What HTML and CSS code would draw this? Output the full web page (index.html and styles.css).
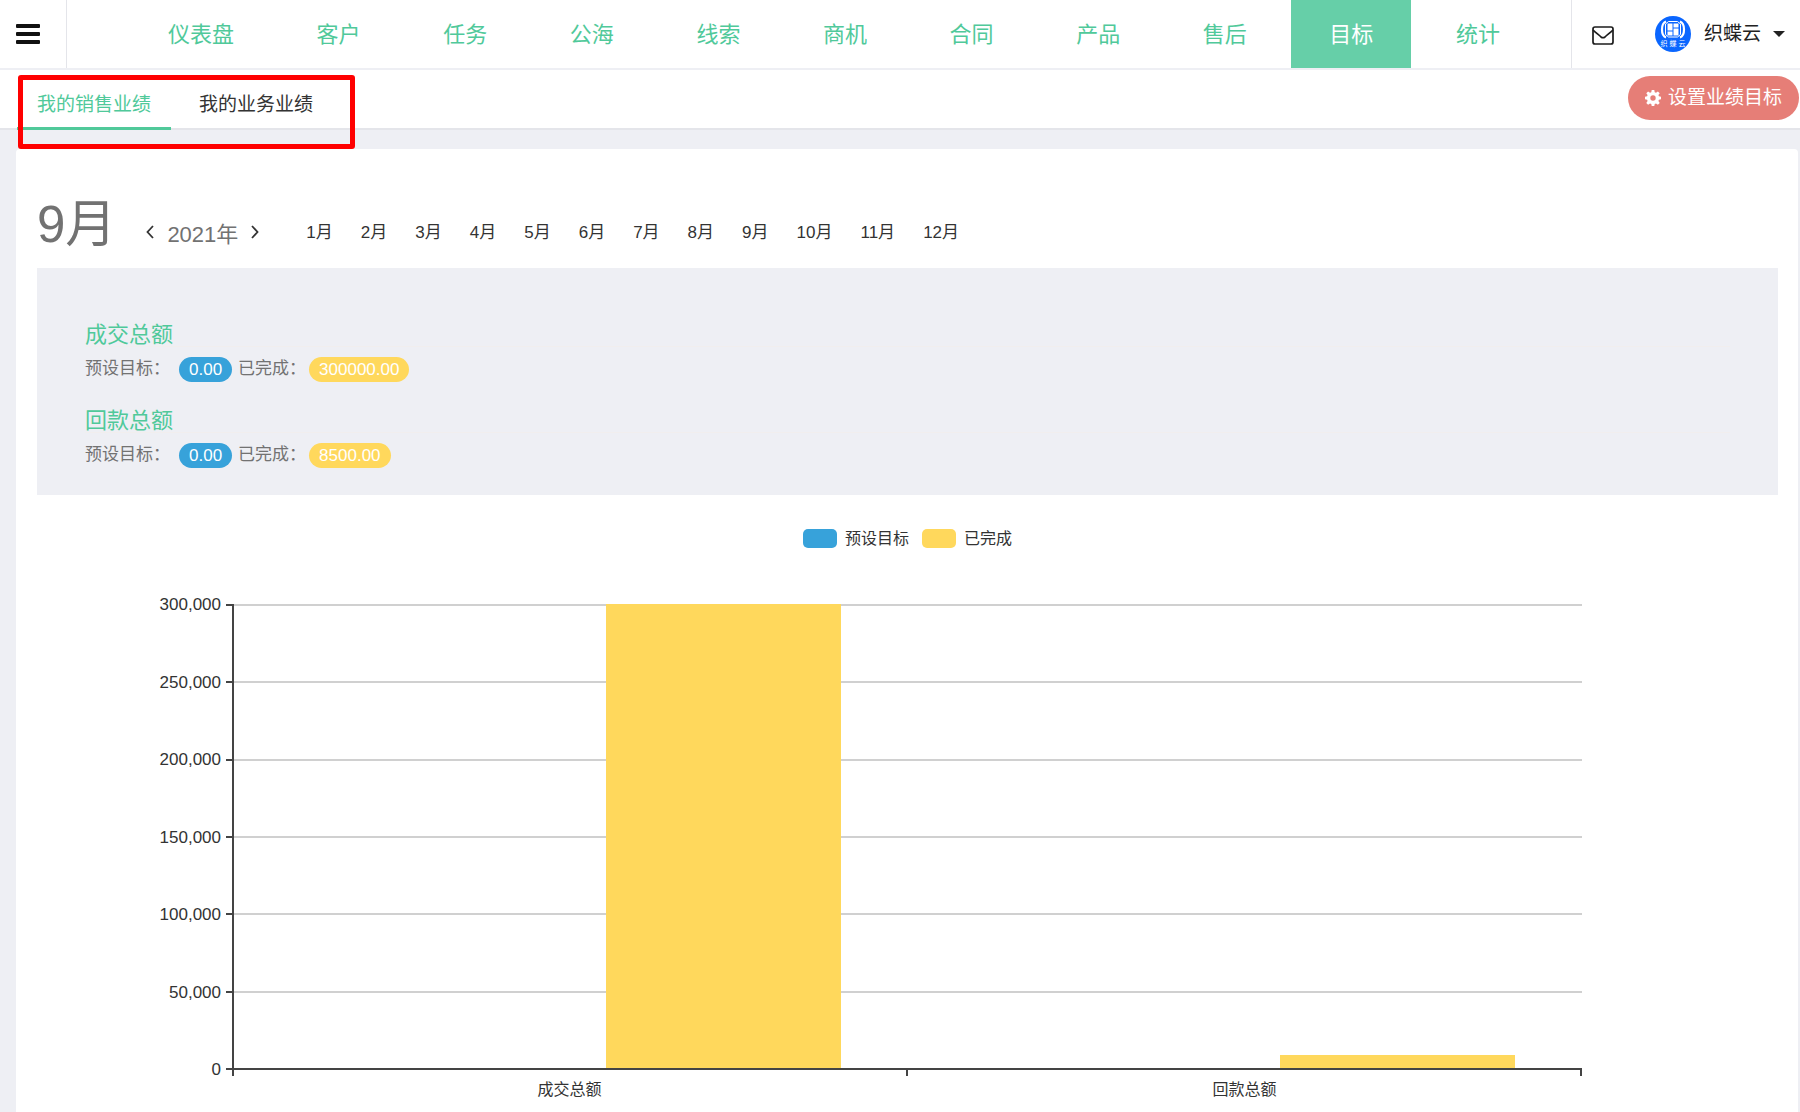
FILE: index.html
```html
<!DOCTYPE html>
<html lang="zh-CN">
<head>
<meta charset="utf-8">
<meta name="viewport" content="width=device-width, initial-scale=1">
<title>我的销售业绩</title>
<link rel="stylesheet" href="styles.css">
</head>
<body>
<header class="topbar">
  <div class="menu-cell">
    <button class="menu-button" type="button" aria-label="菜单"><span></span><span></span><span></span></button>
  </div>
  <nav class="main-nav">
    <a href="#">仪表盘</a>
    <a href="#">客户</a>
    <a href="#">任务</a>
    <a href="#">公海</a>
    <a href="#">线索</a>
    <a href="#">商机</a>
    <a href="#">合同</a>
    <a href="#">产品</a>
    <a href="#">售后</a>
    <a href="#" class="active" aria-current="page">目标</a>
    <a href="#">统计</a>
  </nav>
  <div class="user-area">
    <a class="mail" href="#" aria-label="消息">
      <svg width="24" height="20" viewBox="0 0 24 20" fill="none" stroke="#1c1c1c" stroke-width="1.700" stroke-linejoin="round"><rect x="2" y="2" width="20" height="17" rx="2"/><path d="M2 5c3 3 6 5 8 7q2 1.400 4 0c2-2 5-4 8-7"/></svg>
    </a>
    <button class="user-menu" type="button">
      <svg class="avatar" width="36" height="36" viewBox="0 0 36 36">
        <circle cx="18" cy="18" r="18" fill="#0a66ff"/>
        <g fill="none" stroke="#fff">
          <path d="M11 5.500Q7 7 7 13.500t4 8M25 5.500q4 1.500 4 8t-4 8" stroke-width="2.200"/>
          <path d="M13.500 5.500h9l3 2.500v10.500l-3 2.500h-9l-3-2.500V8z" stroke-width="1"/>
        </g>
        <path d="M12.500 7.500h5v7h-5zM12.500 15.500h5v4h-5zM18.500 7.500h5v4h-5zM18.500 12.500h5v7h-5z" fill="#fff"/>
        <text class="avatar-text" x="18" y="30" text-anchor="middle">织 蝶 云</text>
      </svg>
      <span>织蝶云</span>
      <i class="caret"></i>
    </button>
  </div>
</header>

<div class="subbar">
  <nav class="tabs">
    <a href="#" class="tab active">我的销售业绩</a>
    <a href="#" class="tab">我的业务业绩</a>
    <span class="highlight"></span>
  </nav>
  <button class="goal-button" type="button">
    <svg width="16" height="16" viewBox="0 0 16 16"><path fill="#fff" fill-rule="evenodd" d="M6.700 0h2.600l.4 2.200 1.300.5L12.900 1.400l1.800 1.800-1.300 1.900.5 1.200 2.100.4v2.600l-2.100.4-.5 1.300 1.300 1.900-1.800 1.800-1.900-1.300-1.300.5L9.300 16H6.700l-.4-2.100-1.300-.5-1.900 1.300-1.800-1.800L2.600 11l-.5-1.300L0 9.300V6.700l2.100-.4.5-1.200L1.300 3.200l1.800-1.800L5 2.700l1.300-.5zM8 5.300a2.700 2.700 0 1 0 0 5.400 2.700 2.700 0 0 0 0-5.400z"/></svg>
    <span>设置业绩目标</span>
  </button>
</div>

<main class="card">
  <div class="period">
    <h1>9月</h1>
    <div class="year">
      <button type="button" aria-label="上一年"><svg width="8" height="14" viewBox="0 0 8 14" fill="none" stroke="#333" stroke-width="1.800"><path d="M7 1 1.500 7 7 13"/></svg></button>
      <span>2021年</span>
      <button type="button" aria-label="下一年"><svg width="8" height="14" viewBox="0 0 8 14" fill="none" stroke="#333" stroke-width="1.800"><path d="M1 1l5.500 6L1 13"/></svg></button>
    </div>
    <nav class="months">
      <a href="#">1月</a><a href="#">2月</a><a href="#">3月</a><a href="#">4月</a><a href="#">5月</a><a href="#">6月</a><a href="#">7月</a><a href="#">8月</a><a href="#">9月</a><a href="#">10月</a><a href="#">11月</a><a href="#">12月</a>
    </nav>
  </div>

  <section class="summary">
    <div class="metric">
      <h2>成交总额</h2>
      <p>预设目标：<span class="badge blue">0.00</span>已完成：<span class="badge yellow">300000.00</span></p>
    </div>
    <div class="metric">
      <h2>回款总额</h2>
      <p>预设目标：<span class="badge blue">0.00</span>已完成：<span class="badge yellow">8500.00</span></p>
    </div>
  </section>

  <section class="chart">
    <div class="legend">
      <span class="key"><i class="swatch blue"></i>预设目标</span>
      <span class="key"><i class="swatch yellow"></i>已完成</span>
    </div>
    <div class="plot-row">
      <div class="y-labels">
        <span>300,000</span><span>250,000</span><span>200,000</span><span>150,000</span><span>100,000</span><span>50,000</span><span>0</span>
      </div>
      <div class="y-ticks"><i></i><i></i><i></i><i></i><i></i><i></i><i></i></div>
      <div class="plot">
        <div class="grid-lines"><i></i><i></i><i></i><i></i><i></i><i></i></div>
        <div class="bars">
          <div class="group"><i class="bar blue" style="height:0%"></i><i class="bar yellow" style="height:100%"></i></div>
          <div class="group"><i class="bar blue" style="height:0%"></i><i class="bar yellow" style="height:2.83%"></i></div>
        </div>
      </div>
    </div>
    <div class="x-axis">
      <div class="x-ticks"><i></i><i></i><i></i></div>
      <div class="x-labels"><span>成交总额</span><span>回款总额</span></div>
    </div>
  </section>
</main>
</body>
</html>
```
FILE: styles.css
```css
* { box-sizing: border-box; }

body {
  margin: 0;
  background: #eeeff4;
  color: #333;
  font-family: "Liberation Sans", "Noto Sans CJK SC", sans-serif;
  font-size: 17px;
}

a { color: inherit; text-decoration: none; }

button {
  padding: 0;
  border: 0;
  background: none;
  color: inherit;
  font: inherit;
  cursor: pointer;
}

h1, h2, p { margin: 0; font-weight: 400; }

svg { display: block; }

.blue { background: #37a2da; }
.yellow { background: #ffd85c; }

/* Top bar */
.topbar {
  display: flex;
  height: 70px;
  background: #fff;
  border-bottom: 2px solid #eeeff4;
}

.menu-cell {
  display: flex;
  align-items: center;
  width: 67px;
  padding-left: 16px;
  border-right: 1px solid #e4e5ea;
}

.menu-button { display: grid; gap: 4px; }

.menu-button span {
  width: 24px;
  height: 4px;
  border-radius: 1px;
  background: #111;
}

.main-nav {
  display: flex;
  flex: 1;
  justify-content: space-between;
  padding: 0 33px 0 63px;
  color: #50c99a;
  font-size: 22px;
  line-height: 70px;
}

.main-nav a { height: 68px; padding: 0 38px; white-space: nowrap; }
.main-nav .active { background: #66cfa8; color: #fff; }

.user-area {
  display: flex;
  align-items: center;
  gap: 40px;
  padding: 0 15px 0 19px;
  border-left: 1px solid #e4e5ea;
}

.mail { padding-top: 2px; }

.user-menu {
  display: flex;
  align-items: center;
  gap: 12px;
  color: #222;
  font-size: 19px;
  line-height: 24px;
}

.avatar { margin-right: 1px; }
.avatar-text { fill: #fff; font-size: 7px; }

.caret {
  border: 6px solid transparent;
  border-top-color: #222;
  border-bottom: 0;
}

/* Tabs */
.subbar {
  display: flex;
  justify-content: space-between;
  align-items: flex-start;
  height: 60px;
  padding: 0 1px 0 17px;
  background: #fff;
  border-bottom: 2px solid #e4e5ea;
}

.tabs { position: relative; display: flex; gap: 8px; }

.tab {
  height: 60px;
  padding: 0 20px;
  font-size: 19px;
  line-height: 69px;
}

.tab.active { border-bottom: 3px solid #50c99a; color: #50c99a; }

.highlight {
  position: absolute;
  top: 5px;
  left: 1px;
  width: 337px;
  height: 74px;
  border: 5px solid #f00;
  border-radius: 3px;
}

.goal-button {
  display: flex;
  align-items: center;
  gap: 7px;
  height: 44px;
  margin-top: 6px;
  padding: 0 17px;
  border-radius: 22px;
  background: #e67e77;
  color: #fff;
  font-size: 19px;
  line-height: 26px;
}

/* Card */
.card {
  margin: 19px 2px 0 16px;
  padding: 46px 20px 12px 21px;
  border-radius: 4px 4px 0 0;
  background: #fff;
}

.period {
  display: flex;
  align-items: baseline;
  height: 73px;
}

h1 { color: #727272; font-size: 51px; line-height: 60px; }

.year {
  display: flex;
  align-items: center;
  align-self: center;
  gap: 13px;
  margin-left: 30px;
  color: #727272;
  font-size: 22px;
}

.months { display: flex; gap: 28px; margin-left: 47px; padding-bottom: 2px; align-self: center; }

.summary {
  padding: 47px 48px 25px;
  background: #eeeff4;
}

.metric + .metric { margin-top: 17px; }

h2 {
  height: 32px;
  border-bottom: 1px solid #f1eeee;
  color: #50c99a;
  font-size: 22px;
  line-height: 39px;
}

.metric p {
  display: flex;
  align-items: center;
  height: 37px;
  padding-top: 7px;
  color: #727272;
  line-height: 22px;
}

.badge {
  height: 25px;
  margin: 0 6px 0 9px;
  padding: 0 10px;
  border-radius: 13px;
  color: #fff;
  line-height: 26px;
}

.badge.yellow { margin: 0 0 0 3px; }

/* Chart */
.chart { color: #333; line-height: 20px; }

.legend {
  display: flex;
  justify-content: center;
  gap: 13px;
  padding-top: 33px;
  font-size: 16px;
  line-height: 21px;
}

.key { display: flex; align-items: center; gap: 8px; }
.swatch { width: 34px; height: 19px; border-radius: 5px; }

.plot-row { display: flex; padding: 46px 196px 0 0; }

.y-labels, .y-ticks {
  display: flex;
  flex-direction: column;
  justify-content: space-between;
}

.y-labels { width: 184px; margin-bottom: -10px; text-align: right; }
.y-ticks { width: 6px; margin: 9px 0 0 5px; }
.y-ticks i { height: 2px; background: #444; }

.plot {
  display: grid;
  flex: 1;
  height: 466px;
  margin-top: 9px;
  border: solid #444;
  border-width: 0 0 2px 2px;
}

.grid-lines, .bars { grid-area: 1 / 1; display: flex; min-height: 0; }
.grid-lines { flex-direction: column; }
.grid-lines i { flex: 1; border-top: 2px solid #d0d0d0; }

.group {
  display: flex;
  flex: 1;
  justify-content: space-between;
  align-items: flex-end;
  padding: 0 5%;
}

.bar { width: 43.5%; }

.x-axis { margin: 0 196px 0 195px; }
.x-ticks { display: flex; justify-content: space-between; height: 6px; }
.x-ticks i { width: 2px; background: #444; }

.x-labels { display: flex; font-size: 16px; }
.x-labels span { flex: 1; padding-top: 4px; text-align: center; }
```
